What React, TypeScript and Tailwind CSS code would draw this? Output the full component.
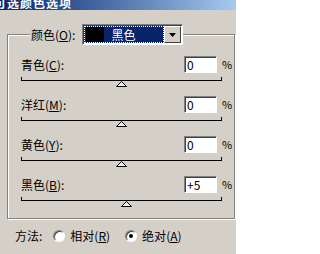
import React from "react";

interface Row {
  name: string;
  hotkey: string;
  value: string;
}

const rows: Row[] = [
  { name: "青色", hotkey: "C", value: "0" },
  { name: "洋红", hotkey: "M", value: "0" },
  { name: "黄色", hotkey: "Y", value: "0" },
  { name: "黑色", hotkey: "B", value: "+5" },
];

const Slider = ({ value }: { value: number }) => {
  // 200px track, -100..100 => 1px per percent
  const left = 100 + value - 5;
  return (
    <div className="relative h-[23px] w-[201px]">
      <div className="absolute left-0 top-[4px] h-[4px] w-px bg-black" />
      <div className="absolute right-0 top-[4px] h-[4px] w-px bg-black" />
      <div className="absolute left-0 right-0 top-[7px] h-px bg-black" />
      <svg
        className="absolute top-[8px]"
        style={{ left }}
        width="11"
        height="6"
        viewBox="0 0 11 6"
      >
        <polygon points="5.5,0.5 10.5,5.5 0.5,5.5" fill="#f4f3ee" stroke="#000" strokeWidth="1" />
      </svg>
    </div>
  );
};

const SliderRow = ({ row }: { row: Row }) => (
  <div className="flex flex-col">
    <div className="flex h-[17px] items-center">
      <span className="flex-1 text-[12px] leading-none">
        {row.name}(<u>{row.hotkey}</u>):
      </span>
      <div className="flex h-[17px] w-[33px] items-center border border-t-[#808080] border-l-[#808080] border-b-white border-r-white bg-white pl-[2px] text-[12px] leading-none shadow-[inset_1px_1px_0_#404040]">
        {row.value}
      </div>
      <span className="ml-[5px] mr-[6px] w-[6px] text-[11px] leading-none">%</span>
    </div>
    <Slider value={parseInt(row.value, 10)} />
  </div>
);

const Radio = ({ checked, label, hotkey }: { checked: boolean; label: string; hotkey: string }) => (
  <div className="flex items-center gap-[5px]">
    <div className="flex h-[12px] w-[12px] items-center justify-center rounded-full border border-t-[#808080] border-l-[#808080] border-b-white border-r-white bg-white shadow-[inset_1px_1px_0_#404040]">
      {checked && <div className="h-[4px] w-[4px] rounded-full bg-black" />}
    </div>
    <span className="text-[12px] leading-none">
      {label}(<u>{hotkey}</u>)
    </span>
  </div>
);

const App = () => {
  return (
    <div className="h-[254px] w-[236px] overflow-hidden bg-[#d4d0c8] font-['Noto_Sans_CJK_SC',sans-serif] text-black">
      {/* title bar, mostly scrolled off */}
      <div className="h-[10px] overflow-hidden bg-gradient-to-r from-[#0a246a] to-[#a6caf0]">
        <div className="-ml-[6px] -mt-[4px] text-[12px] font-bold leading-[14px] tracking-[1px] text-white">
          可选颜色选项
        </div>
      </div>

      <fieldset className="ml-[7px] mr-[1px] mt-[14px] border border-[#808080] pb-[2px] pl-[13px] pr-0 pt-[11px] shadow-[inset_1px_1px_0_#fff,1px_1px_0_#fff]">
        <legend className="ml-[9px] flex items-center bg-[#d4d0c8] pl-[1px]">
          <span className="mr-[7px] text-[12px] leading-none">
            颜色(<u>O</u>):
          </span>
          <div className="flex h-[21px] w-[101px] items-center border border-t-[#808080] border-l-[#808080] border-b-white border-r-white bg-white p-px shadow-[inset_1px_1px_0_#404040]">
            <div className="flex h-[17px] flex-1 items-center bg-[#0a246a] outline-1 -outline-offset-1 outline-dotted outline-white">
              <div className="ml-[2px] h-[15px] w-[18px] bg-black" />
              <span className="ml-[7px] text-[12px] leading-none text-white">黑色</span>
            </div>
            <div className="flex h-[17px] w-[17px] items-center justify-center border border-t-white border-l-white border-b-[#404040] border-r-[#404040] bg-[#d4d0c8]">
              <svg width="7" height="4" viewBox="0 0 7 4">
                <polygon points="0,0 7,0 3.5,4" fill="#000" />
              </svg>
            </div>
          </div>
        </legend>

        {rows.map((row) => (
          <SliderRow key={row.hotkey} row={row} />
        ))}
      </fieldset>

      <div className="ml-[15px] mt-[11px] flex items-center">
        <span className="mr-[11px] text-[12px] leading-none">方法:</span>
        <Radio checked={false} label="相对" hotkey="R" />
        <div className="w-[15px]" />
        <Radio checked={true} label="绝对" hotkey="A" />
      </div>
    </div>
  );
};

export default App;
